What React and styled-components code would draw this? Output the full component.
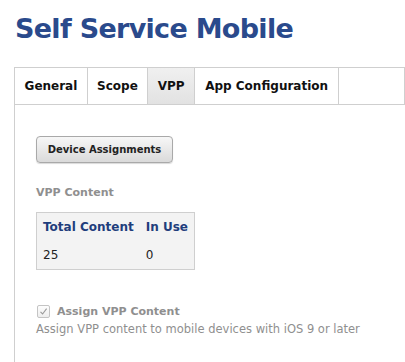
import React from 'react'
import styled, { createGlobalStyle } from 'styled-components'

const GlobalStyle = createGlobalStyle`
  html, body {
    margin: 0;
    padding: 0;
    background: #fff;
  }
  body {
    font-family: 'DejaVu Sans', 'Liberation Sans', sans-serif;
    color: #222;
  }
`

const Page = styled.div`
  width: 405px;
  height: 362px;
  overflow: hidden;
  padding: 13px 0 0 14px;
  box-sizing: border-box;
`

const Title = styled.h1`
  margin: 0 0 0 1px;
  font-size: 27px;
  line-height: 32px;
  font-weight: bold;
  color: #2a4a8c;
  letter-spacing: -0.7px;
`

const TabBar = styled.div`
  display: flex;
  margin-top: 22px;
  height: 36px;
  border-top: 1px solid #cfcfcf;
  border-bottom: 1px solid #cfcfcf;
  border-left: 1px solid #cfcfcf;
`

const Tab = styled.div`
  display: flex;
  align-items: center;
  justify-content: center;
  width: ${p => p.$w}px;
  border-right: 1px solid #cfcfcf;
  font-size: 12px;
  font-weight: bold;
  color: #111;
  background: ${p => (p.$active ? 'linear-gradient(#f0f0f0, #e2e2e2)' : '#fff')};
`

const Panel = styled.div`
  border-left: 1px solid #cfcfcf;
  padding: 31px 0 40px 21px;
`

const Button = styled.button`
  display: block;
  width: 137px;
  height: 27px;
  border: 1px solid #a9a9a9;
  border-radius: 4px;
  background: linear-gradient(#f7f7f7, #dadada);
  box-shadow: 0 1px 1px rgba(0, 0, 0, 0.15);
  font-family: inherit;
  font-size: 10px;
  font-weight: bold;
  color: #222;
  padding: 0;
`

const SectionLabel = styled.div`
  margin-top: 23px;
  font-size: 11px;
  font-weight: bold;
  color: #8f8f8f;
`

const Table = styled.table`
  margin-top: 13px;
  border-collapse: collapse;
  border: 1px solid #cfcfcf;
  background: #f3f3f3;
  font-size: 12px;
  th, td {
    text-align: left;
    padding: 0 6px;
    height: 28px;
  }
  th {
    color: #1f3e7c;
    font-weight: bold;
  }
  td {
    color: #222;
  }
`

const CheckRow = styled.label`
  display: flex;
  align-items: center;
  gap: 7px;
  margin-top: 35px;
  padding-left: 1px;
  font-size: 11px;
  font-weight: bold;
  color: #8f8f8f;
`

const Box = styled.span`
  display: inline-flex;
  align-items: center;
  justify-content: center;
  width: 11px;
  height: 11px;
  border: 1px solid #c4c4c4;
  border-radius: 2px;
  background: linear-gradient(#fdfdfd, #eeeeee);
`

const Hint = styled.div`
  margin-top: 4px;
  font-size: 11.5px;
  color: #8f8f8f;
`

const tabs = [
  { label: 'General', w: 73 },
  { label: 'Scope', w: 60 },
  { label: 'VPP', w: 47, active: true },
  { label: 'App Configuration', w: 145 },
  { label: '', w: 66 }
]

const App = () => {
  return (
    <Page>
      <GlobalStyle />
      <Title>Self Service Mobile</Title>
      <TabBar>
        {tabs.map((t, i) => (
          <Tab key={i} $w={t.w} $active={t.active}>
            {t.label}
          </Tab>
        ))}
      </TabBar>
      <Panel>
        <Button>Device Assignments</Button>
        <SectionLabel>VPP Content</SectionLabel>
        <Table>
          <thead>
            <tr>
              <th>Total Content</th>
              <th>In Use</th>
            </tr>
          </thead>
          <tbody>
            <tr>
              <td>25</td>
              <td>0</td>
            </tr>
          </tbody>
        </Table>
        <CheckRow>
          <Box>
            <svg width="9" height="9" viewBox="0 0 9 9">
              <path d="M1.5 4.8 L3.6 7 L7.6 1.6" fill="none" stroke="#9a9a9a" strokeWidth="1.1" />
            </svg>
          </Box>
          Assign VPP Content
        </CheckRow>
        <Hint>Assign VPP content to mobile devices with iOS 9 or later</Hint>
      </Panel>
    </Page>
  )
}

export default App
